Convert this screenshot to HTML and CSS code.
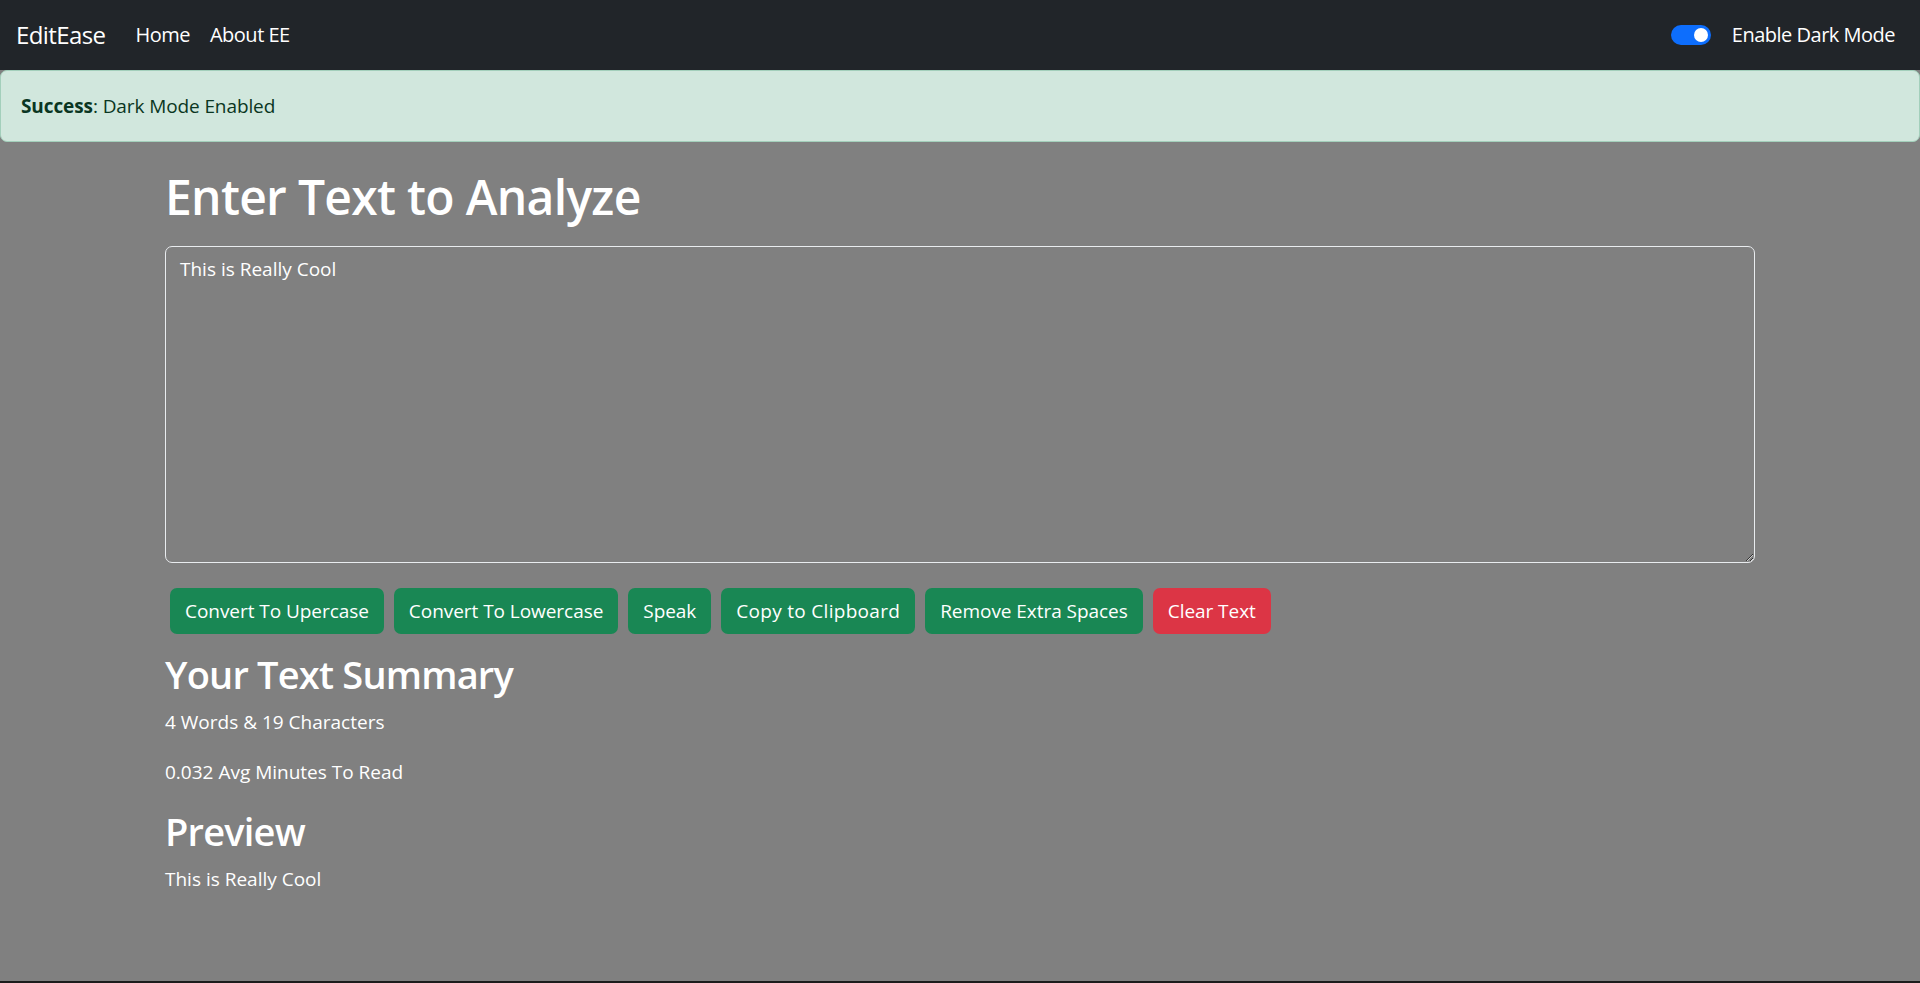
FILE: index.html
```html
<!DOCTYPE html>
<html lang="en">
<head>
<meta charset="utf-8">
<title>EditEase</title>
<link rel="stylesheet" href="styles.css">
</head>
<body>
<nav class="navbar">
  <div class="nav-left">
    <a class="brand" href="#">EditEase</a>
    <ul class="nav-links">
      <li><a class="nav-link" href="#">Home</a></li>
      <li><a class="nav-link" href="#">About EE</a></li>
    </ul>
  </div>
  <div class="switch-wrap">
    <span class="switch"><span class="knob"></span></span>
    <label class="switch-label">Enable Dark Mode</label>
  </div>
</nav>
<div class="alert"><strong>Success</strong>: Dark Mode Enabled</div>
<main class="container">
  <h1 class="title">Enter Text to Analyze</h1>
  <div class="area-wrap">
    <textarea class="text-input" rows="10">This is Really Cool</textarea>
  </div>
  <div class="btn-row">
    <button class="btn btn-green">Convert To Upercase</button>
    <button class="btn btn-green">Convert To Lowercase</button>
    <button class="btn btn-green">Speak</button>
    <button class="btn btn-green btn-copy">Copy to Clipboard</button>
    <button class="btn btn-green">Remove Extra Spaces</button>
    <button class="btn btn-red">Clear Text</button>
  </div>
  <section class="summary">
    <h2 class="sub">Your Text Summary</h2>
    <p class="line">4 Words &amp; 19 Characters</p>
    <p class="line">0.032 Avg Minutes To Read</p>
    <h2 class="sub">Preview</h2>
    <p class="line">This is Really Cool</p>
  </section>
</main>
</body>
</html>
```
FILE: styles.css
```css
html {
  background: #1c1c1c;
}
body {
  margin: 0;
  min-height: calc(100vh - 2px);
  background: #808080;
  color: #fff;
  font-family: "Open Sans", "Noto Sans", sans-serif;
  font-size: 20px;
  line-height: 1.5;
}
.navbar {
  height: 70px;
  box-sizing: border-box;
  background: #212529;
  display: flex;
  align-items: center;
  justify-content: space-between;
  padding: 0 15px 0 16px;
}
.nav-left {
  display: flex;
  align-items: center;
}
.brand {
  color: #fff;
  text-decoration: none;
  font-size: 24px;
  margin-right: 20px;
  letter-spacing: -0.6px;
}
.nav-links {
  list-style: none;
  margin: 0;
  padding: 0;
  display: flex;
}
.nav-link {
  display: block;
  color: #fff;
  text-decoration: none;
  padding: 0 10px;
  letter-spacing: -0.5px;
}
.switch-wrap {
  display: flex;
  align-items: center;
  margin-right: 10px;
}
.switch {
  width: 40px;
  height: 20px;
  border-radius: 10px;
  background: #0d6efd;
  display: flex;
  align-items: center;
  justify-content: flex-end;
  padding: 0 3px;
  box-sizing: border-box;
  margin-right: 21px;
}
.knob {
  width: 14px;
  height: 14px;
  border-radius: 50%;
  background: #fff;
}
.switch-label {
  letter-spacing: -0.5px;
}
.alert {
  background: #d1e7dd;
  border: 1px solid #a3cfbb;
  border-radius: 7px;
  color: #0a3622;
  padding: 20px;
  height: 72px;
  box-sizing: border-box;
  line-height: 30px;
  letter-spacing: -0.1px;
  font-size: 19px;
}
.alert strong {
  font-weight: 700;
}
.container {
  width: 1590px;
  margin: 0 auto;
  padding: 25px 0 20px;
}
.title {
  margin: 0;
  font-size: 48px;
  font-weight: 600;
  line-height: 60px;
  letter-spacing: -0.7px;
}
.area-wrap {
  margin-top: 19px;
}
.text-input {
  display: block;
  width: 100%;
  box-sizing: border-box;
  height: 317px;
  background: transparent;
  border: 1px solid #e9ecef;
  border-radius: 7px;
  color: #fff;
  font-family: inherit;
  font-size: 19px;
  line-height: 30px;
  padding: 7px 14px;
  letter-spacing: 0;
  resize: vertical;
  outline: none;
}
.btn-row {
  margin-top: 25px;
  display: flex;
  gap: 10px;
  padding-left: 5px;
}
.btn {
  height: 46px;
  border: none;
  border-radius: 7px;
  color: #fff;
  font-family: inherit;
  font-size: 19px;
  letter-spacing: -0.05px;
  padding: 0 15px;
  cursor: pointer;
}
.btn-copy {
  letter-spacing: 0.3px;
}
.btn-green {
  background: #198754;
}
.btn-red {
  background: #dc3545;
}
.summary {
  margin-top: 16px;
}
.sub {
  margin: 0 0 9px;
  font-size: 38px;
  font-weight: 600;
  line-height: 48px;
  letter-spacing: -0.8px;
}
.line {
  margin: 0 0 20px;
  font-size: 19px;
  line-height: 30px;
  letter-spacing: 0;
}
.line:last-child {
  margin-bottom: 0;
}
```
